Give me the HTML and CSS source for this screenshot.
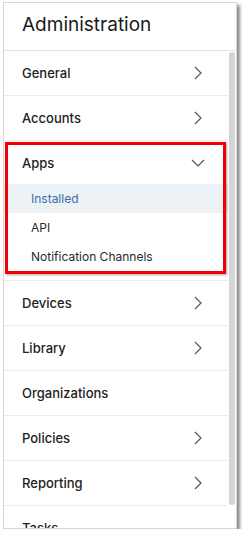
FILE: index.html
```html
<!DOCTYPE html>
<html>
<head>
    <title>Administration</title>
    <link rel="stylesheet" href="styles.css">
</head>
<body>
    <div class="panel">
        <div class="header">
            <h1>Administration</h1>
        </div>
        <div class="content">
            <div class="list">
                <div class="row">
                    <span>General</span>
                    <svg class="chev" viewBox="0 0 8 14"><path d="M1 1l6 6-6 6"/></svg>
                </div>
                <div class="row">
                    <span>Accounts</span>
                    <svg class="chev" viewBox="0 0 8 14"><path d="M1 1l6 6-6 6"/></svg>
                </div>
                <div class="group">
                    <div class="row group-head">
                        <span>Apps</span>
                        <svg class="chev-down" viewBox="0 0 14 8"><path d="M1 1l6 6 6-6"/></svg>
                    </div>
                    <div class="sub active">Installed</div>
                    <div class="sub">API</div>
                    <div class="sub">Notification Channels</div>
                </div>
                <div class="row">
                    <span>Devices</span>
                    <svg class="chev" viewBox="0 0 8 14"><path d="M1 1l6 6-6 6"/></svg>
                </div>
                <div class="row">
                    <span>Library</span>
                    <svg class="chev" viewBox="0 0 8 14"><path d="M1 1l6 6-6 6"/></svg>
                </div>
                <div class="row">
                    <span>Organizations</span>
                </div>
                <div class="row">
                    <span>Policies</span>
                    <svg class="chev" viewBox="0 0 8 14"><path d="M1 1l6 6-6 6"/></svg>
                </div>
                <div class="row">
                    <span>Reporting</span>
                    <svg class="chev" viewBox="0 0 8 14"><path d="M1 1l6 6-6 6"/></svg>
                </div>
                <div class="row">
                    <span>Tasks</span>
                </div>
            </div>
            <div class="scrollbar">
                <div class="thumb"></div>
            </div>
        </div>
    </div>
</body>
</html>
```
FILE: styles.css
```css
body {
    margin: 0;
    padding: 2px 0 0 3px;
    font-family: Inter, "Noto Sans", sans-serif;
    background: #fff;
}
.panel {
    width: 232px;
    height: 525px;
    border: 1px solid #d6d6d6;
    box-shadow: 3px 3px 3px rgba(0, 0, 0, 0.45);
    background: #fff;
    display: flex;
    flex-direction: column;
}
.header {
    height: 47px;
    padding-left: 18px;
    border-bottom: 1px solid #e3e3e3;
    display: flex;
    align-items: center;
    flex-shrink: 0;
}
h1 {
    margin: 0 0 4px 0;
    font-size: 19px;
    font-weight: 400;
    color: #1a1a1a;
}
.content {
    flex: 1;
    display: flex;
    min-height: 0;
}
.list {
    flex: 1;
    overflow: hidden;
}
.scrollbar {
    width: 8px;
    padding: 1px 1px 23px 1px;
    box-sizing: border-box;
    display: flex;
}
.thumb {
    flex: 1;
    background: #d4d4d4;
    border-radius: 3px;
}
.row {
    height: 44px;
    padding: 0 26px 0 18px;
    border-bottom: 1px solid #ececec;
    display: flex;
    align-items: center;
    justify-content: space-between;
    font-size: 13px;
    font-weight: 500;
    color: #222;
}
.chev {
    width: 8px;
    height: 14px;
    fill: none;
    stroke: #555;
    stroke-width: 1.2;
}
.chev-down {
    width: 14px;
    height: 8px;
    fill: none;
    stroke: #555;
    stroke-width: 1.2;
    margin-right: -3px;
}
.group {
    position: relative;
    padding-bottom: 9px;
    border-bottom: 1px solid #ececec;
}
.group::after {
    content: "";
    position: absolute;
    top: 1px;
    left: 1px;
    right: 2px;
    bottom: 6px;
    border: 3px solid #f00000;
    box-shadow: 1px 1px 2px rgba(0, 0, 0, 0.35);
    pointer-events: none;
}
.group-head {
    height: 43px;
    border-bottom: none;
}
.sub {
    height: 29px;
    padding-left: 27px;
    display: flex;
    align-items: center;
    font-size: 12px;
    color: #2a2a2a;
}
.sub.active {
    background: #edf2f7;
    color: #3b6ea5;
}
```
